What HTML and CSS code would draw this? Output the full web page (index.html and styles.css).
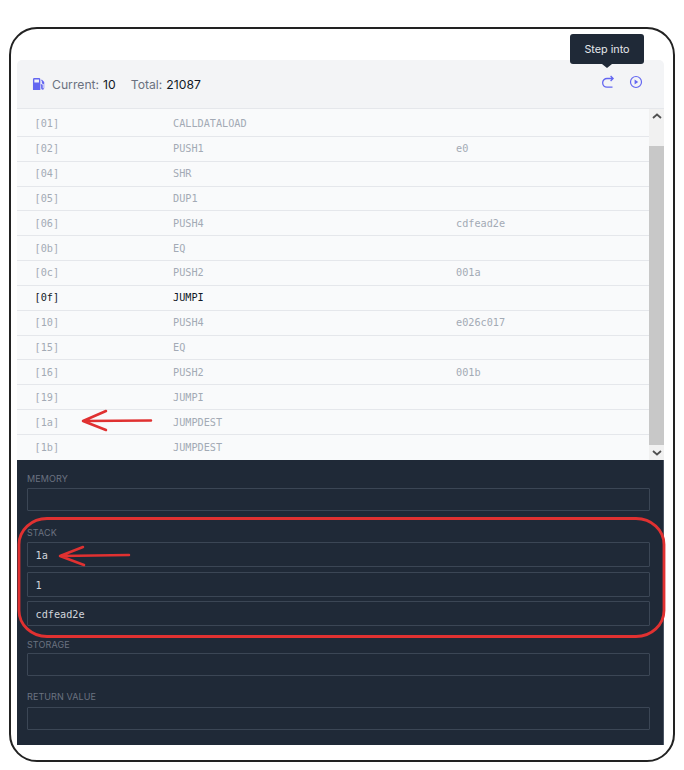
FILE: index.html
```html
<!DOCTYPE html>
<html lang="en">
<head>
<meta charset="utf-8">
<title>Debugger</title>
<link rel="stylesheet" href="styles.css">
</head>
<body>
<main class="frame">
  <section class="panel">
    <header class="head">
      <div class="gas">
        <svg class="gas-icon" viewBox="0 0 14 13" width="13" height="12" aria-hidden="true"><path fill="#6366f1" d="M1 1.500C1 .7 1.600 0 2.500 0h5C8.300 0 9 .7 9 1.500V13H1V1.500zM2.500 1.500V5h5V1.500h-5zM9.800 2.500l.8-.8 2.600 2.600v6.600a1.700 1.700 0 0 1-3.400 0V8H9.500V6.800h.9c.7 0 1.200.5 1.200 1.200v2.900a.5.5 0 0 0 1 0V6.400h-.7c-.7 0-1.300-.6-1.300-1.300V3.600l-.8-1.100z"/></svg>
        <span class="gas-label">Current:</span><span class="gas-value">10</span>
        <span class="gas-label total">Total:</span><span class="gas-value">21087</span>
      </div>
      <div class="tools">
        <svg class="tool" viewBox="0 0 14 14" width="14" height="14" aria-hidden="true"><path d="M11.500 3.500H6a4.300 4.300 0 0 0 0 8.700h5.500M9.600 1l2.500 2.500L9.600 6" fill="none" stroke="#6366f1" stroke-width="1.300"/></svg>
        <svg class="tool" viewBox="0 0 14 14" width="14" height="14" aria-hidden="true"><circle cx="7" cy="7" r="5.500" fill="none" stroke="#6366f1" stroke-width="1.200"/><path d="M5.600 4.600 9.200 7l-3.600 2.400z" fill="#6366f1"/></svg>
      </div>
    </header>
    <div class="code">
      <ol class="rows">
        <li class="row"><span class="addr">[01]</span><span class="op">CALLDATALOAD</span><span class="arg"></span></li>
        <li class="row"><span class="addr">[02]</span><span class="op">PUSH1</span><span class="arg">e0</span></li>
        <li class="row"><span class="addr">[04]</span><span class="op">SHR</span><span class="arg"></span></li>
        <li class="row"><span class="addr">[05]</span><span class="op">DUP1</span><span class="arg"></span></li>
        <li class="row"><span class="addr">[06]</span><span class="op">PUSH4</span><span class="arg">cdfead2e</span></li>
        <li class="row"><span class="addr">[0b]</span><span class="op">EQ</span><span class="arg"></span></li>
        <li class="row"><span class="addr">[0c]</span><span class="op">PUSH2</span><span class="arg">001a</span></li>
        <li class="row active"><span class="addr">[0f]</span><span class="op">JUMPI</span><span class="arg"></span></li>
        <li class="row"><span class="addr">[10]</span><span class="op">PUSH4</span><span class="arg">e026c017</span></li>
        <li class="row"><span class="addr">[15]</span><span class="op">EQ</span><span class="arg"></span></li>
        <li class="row"><span class="addr">[16]</span><span class="op">PUSH2</span><span class="arg">001b</span></li>
        <li class="row"><span class="addr">[19]</span><span class="op">JUMPI</span><span class="arg"></span></li>
        <li class="row"><span class="addr">[1a]</span><span class="op">JUMPDEST</span><span class="arg"></span></li>
        <li class="row"><span class="addr">[1b]</span><span class="op">JUMPDEST</span><span class="arg"></span></li>
      </ol>
      <div class="scrollbar">
        <svg class="chev" viewBox="0 0 10 6" width="10" height="6" aria-hidden="true"><path d="M1 5l4-3.500L9 5" fill="none" stroke="#505050" stroke-width="1.800"/></svg>
        <div class="thumb-track"><div class="thumb"></div></div>
        <svg class="chev" viewBox="0 0 10 6" width="10" height="6" aria-hidden="true"><path d="M1 1l4 3.500L9 1" fill="none" stroke="#505050" stroke-width="1.800"/></svg>
      </div>
    </div>
    <div class="state">
      <h3 class="label">Memory</h3>
      <div class="box empty"></div>
      <h3 class="label label-stack">Stack</h3>
      <div class="stack">
        <div class="box">1a</div>
        <div class="box">1</div>
        <div class="box">cdfead2e</div>
      </div>
      <h3 class="label label-storage">Storage</h3>
      <div class="box empty"></div>
      <h3 class="label label-return">Return value</h3>
      <div class="box empty"></div>
    </div>
  </section>
</main>
<div class="tooltip">Step into</div>
<svg class="marks" viewBox="0 0 684 770" width="684" height="770" aria-hidden="true">
  <g fill="none" stroke="#e03131" stroke-width="2.500" stroke-linecap="round" stroke-linejoin="round">
    <path d="M151 420.500 83 421M106 411 83 421 106 430"/>
    <path d="M129 555 60 556M83 547 60 556 84 565"/>
    <rect x="19" y="518.500" width="645" height="118" rx="28" ry="26" stroke-width="2.800"/>
  </g>
</svg>
</body>
</html>
```
FILE: styles.css
```css
* { box-sizing: border-box; }
html, body { margin: 0; padding: 0; }
body {
  width: 684px;
  height: 770px;
  overflow: hidden;
  position: relative;
  background: #fff;
  font-family: Inter, "Liberation Sans", sans-serif;
}
.frame {
  margin: 27px 0 0 9px;
  width: 666px;
  height: 735px;
  border: 2px solid #222;
  border-radius: 28px;
  padding: 31px 10px 0 6px;
}
.panel { width: 647px; }
.head {
  height: 49px;
  background: #f3f4f6;
  border-bottom: 1px solid #e5e7eb;
  border-radius: 5px 5px 0 0;
  display: flex;
  align-items: center;
  justify-content: space-between;
  padding: 0 21px 0 15px;
}
.gas {
  display: flex;
  align-items: center;
  font-size: 12.200px;
  color: #111827;
}
.gas-icon { margin-right: 7px; }
.gas-label { color: #6b7280; margin-right: 4px; }
.gas-value { color: #111827; }
.total { margin-left: 15px; }
.tools { display: flex; gap: 14px; margin-top: -4px; }
.code { display: flex; height: 351px; background: #f9fafb; padding-top: 3px; }
.rows { list-style: none; margin: 0; padding: 0; width: 632px; }
.row {
  height: 24.850px;
  display: flex;
  align-items: center;
  padding-left: 17.500px;
  border-bottom: 1px solid #e5e7eb;
  font: 10.200px "DejaVu Sans Mono", monospace;
  color: #a3aab5;
}
.row:last-child { border-bottom: 0; }
.active { color: #111827; }
.addr { width: 138.500px; }
.op { width: 283px; }
.scrollbar {
  width: 15px;
  margin-top: -3px;
  background: #f1f1f1;
  display: flex;
  flex-direction: column;
  align-items: center;
}
.chev { flex: none; margin: 4px 0; }
.thumb-track { flex: 1; width: 100%; padding-top: 23px; }
.thumb { height: 299px; background: #c8c8c8; }
.state {
  height: 285px;
  background: #1f2937;
  border-right: 1px solid #4b5563;
  padding: 12px 13px 0 10px;
}
.label {
  margin: 0 0 3px;
  font-size: 9px;
  line-height: 13px;
  font-weight: 400;
  color: #6b7280;
  letter-spacing: .1px;
  text-transform: uppercase;
}
.label-stack { margin: 15px 0 3px; }
.label-storage { margin: 11.500px 0 2.500px; }
.label-return { margin: 13.500px 0 4.500px; }
.box {
  height: 23px;
  border: 1px solid #3b4655;
  border-radius: 1px;
  color: #d1d5db;
  font: 10.200px/23px "DejaVu Sans Mono", monospace;
  padding-left: 7.500px;
}
.stack { display: flex; flex-direction: column; gap: 4.500px; }
.stack .box { height: 25px; line-height: 25px; }
.tooltip {
  position: absolute;
  left: 570px;
  top: 34px;
  width: 74px;
  height: 30px;
  background: #1f2937;
  border-radius: 3px;
  color: #e5e7eb;
  font-size: 10.800px;
  line-height: 32px;
  text-align: center;
}
.tooltip::after {
  content: "";
  position: absolute;
  left: 32px;
  top: 30px;
  border: 5px solid transparent;
  border-top: 4px solid #1f2937;
  border-bottom: 0;
}
.marks { position: absolute; left: 0; top: 0; pointer-events: none; }
```
